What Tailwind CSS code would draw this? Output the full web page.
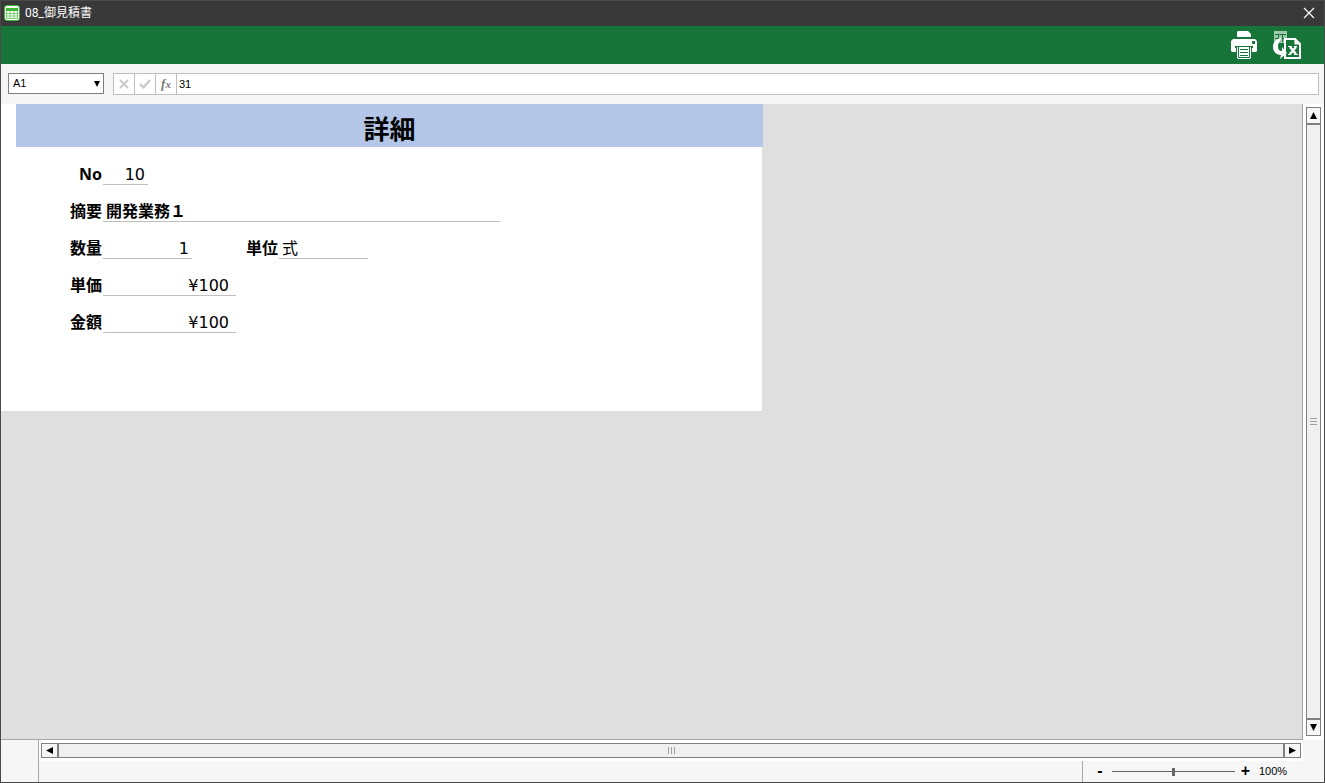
<!DOCTYPE html>
<html lang="ja">
<head>
    <meta charset="UTF-8">
    <meta name="viewport" content="width=device-width, initial-scale=1.0">
    <title>08_御見積書</title>
    <script src="https://cdn.jsdelivr.net/npm/@tailwindcss/browser@4"></script>
</head>
<body class="h-screen flex flex-col overflow-hidden border border-[#4a4a4a] bg-[#f6f6f6] text-black text-[11px] font-['Liberation_Sans','Noto_Sans_CJK_JP',sans-serif]">

    <!-- Title bar -->
    <header class="flex items-center justify-between h-[25px] shrink-0 bg-[#393939] text-white pl-[3px] pr-2 pb-px">
        <div class="flex items-center gap-[5px]">
            <svg class="size-4" viewBox="0 0 16 16">
                <rect x="0.5" y="0.5" width="15" height="15" rx="2.5" fill="#fff" stroke="#3db535"/>
                <path d="M2 3h12v3H2z" fill="#3db535"/>
                <path d="M2.500 6v7.500h11V6M2 8.500h12M2 11h12M6 6v7.500M10 6v7.500" fill="none" stroke="#7ccb74"/>
            </svg>
            <h1 class="text-[12px] leading-4 font-[Roboto,'Noto_Sans_CJK_JP',sans-serif]">08_御見積書</h1>
        </div>
        <button aria-label="閉じる" class="p-px">
            <svg class="size-3" viewBox="0 0 12 12" fill="none" stroke="#fff" stroke-width="1.200">
                <path d="M1 1l10 10M11 1L1 11"/>
            </svg>
        </button>
    </header>

    <!-- Toolbar -->
    <div class="flex items-center justify-end gap-[14px] h-[38px] shrink-0 bg-[#17753a] pr-[22px]">
        <button aria-label="印刷">
            <svg class="w-7 h-[30px]" viewBox="0 0 28 30">
                <path d="M8 1h10l3 3v3H7V2z" fill="#fff"/>
                <path d="M1 11l2-2h22l2 2v10l-1 1h-4v-5H6v5H2l-1-1z" fill="#fff"/>
                <path d="M22 11h3v3h-3z" fill="#17753a"/>
                <path d="M5 16h18v2H5z" fill="#17753a"/>
                <path d="M7 17h14v11l-1 1H8l-1-1z" fill="#fff"/>
                <path d="M8.500 17v10.500h11V17" fill="none" stroke="#17753a"/>
                <path d="M10 19.500h8M10 22.500h8M10 25.500h8" stroke="#17753a"/>
            </svg>
        </button>
        <button aria-label="Excel出力">
            <svg class="w-[30px] h-[30px]" viewBox="0 0 30 30">
                <path d="M2 1h13v12H2z" fill="#a0c8ae"/>
                <path d="M3 4.500h11M3 8.500h11M6.500 4v8M10.500 4v8" stroke="#17753a"/>
                <path d="M13 9h10l5 5v14H13z" fill="#17753a" stroke="#fff" stroke-width="2"/>
                <path d="M22.500 8v6.500H29z" fill="#fff"/>
                <path d="M8 8C3 10 1 13 1 17c0 5 4 8 8 8l-1 4 7-6-5-6v4c-3 0-4-2-4-5s2-6 4-8z" fill="#fff"/>
                <path d="M18 17l6 7M24 17l-6 7" stroke="#fff" stroke-width="2.400"/>
                <path d="M16 16.500h4M22 16.500h3M16 24.500h3M22 24.500h4" stroke="#fff"/>
            </svg>
        </button>
    </div>

    <!-- Name box and formula bar -->
    <div class="flex items-start gap-[9px] h-10 shrink-0 pt-[9px] pl-[7px] pr-[5px]">
        <div class="relative w-24 h-[21px]">
            <select aria-label="名前ボックス" class="appearance-none size-full border border-[#7f7f7f] bg-white pl-1">
                <option>A1</option>
            </select>
            <svg class="absolute right-1 top-2 w-[6px] h-[6px] pointer-events-none" viewBox="0 0 6 6"><path d="M0 0h6L3 6z"/></svg>
        </div>
        <div class="flex flex-1 h-[22px] border border-[#bfbfbf] bg-white">
            <button aria-label="キャンセル" class="flex items-center justify-center w-[21px] border-r border-[#bfbfbf]">
                <svg class="size-[10px]" viewBox="0 0 10 10" fill="none" stroke="#c8c8c8" stroke-width="1.800"><path d="M1 1l8 8M9 1L1 9"/></svg>
            </button>
            <button aria-label="入力" class="flex items-center justify-center w-[21px] border-r border-[#bfbfbf]">
                <svg class="w-3 h-[10px]" viewBox="0 0 12 10" fill="none" stroke="#c8c8c8" stroke-width="2.200"><path d="M1 5l3.500 3.500L11 1"/></svg>
            </button>
            <button aria-label="関数の挿入" class="w-[21px] border-r border-[#bfbfbf] text-[#777] font-bold italic text-[13px] leading-5 font-['Liberation_Serif',serif]">f<span class="text-[11px]">x</span></button>
            <input type="text" aria-label="数式バー" value="31" class="flex-1 min-w-0 pl-[2px] outline-none">
        </div>
    </div>

    <!-- Sheet area -->
    <div class="flex flex-1 min-h-0">
        <main class="flex-1 min-w-0 overflow-hidden bg-[#dfdfdf] border-r border-b border-[#a6a6a6]">
            <section class="w-[761px] h-[307px] bg-white pl-[15px] text-[16px] leading-[23px] font-['Noto_Sans','Noto_Sans_CJK_JP',sans-serif]">
                <h2 class="-mr-px h-[43px] pt-[7px] bg-[#b3c6e7] text-center text-[26px] leading-9 font-bold">詳細</h2>
                <dl class="pt-4 flex flex-col gap-[15px]">
                    <div class="flex h-[22px]">
                        <dt class="w-[87px] pr-px text-right font-bold">No</dt>
                        <dd class="w-[45px] pr-[3px] border-b border-[#bfbfbf] text-right font-['DejaVu_Sans',sans-serif]">10</dd>
                    </div>
                    <div class="flex h-[22px]">
                        <dt class="w-[87px] pr-px text-right font-bold">摘要</dt>
                        <dd class="w-[397px] pl-[3px] border-b border-[#bfbfbf] font-bold">開発業務１</dd>
                    </div>
                    <div class="flex h-[22px]">
                        <dt class="w-[87px] pr-px text-right font-bold">数量</dt>
                        <dd class="w-[89px] pr-[3px] border-b border-[#bfbfbf] text-right font-['DejaVu_Sans',sans-serif]">1</dd>
                        <dt class="w-[87px] pr-px text-right font-bold">単位</dt>
                        <dd class="w-[89px] pl-[3px] border-b border-[#bfbfbf]">式</dd>
                    </div>
                    <div class="flex h-[22px]">
                        <dt class="w-[87px] pr-px text-right font-bold">単価</dt>
                        <dd class="w-[133px] pr-[7px] border-b border-[#bfbfbf] text-right font-['DejaVu_Sans',sans-serif]">¥100</dd>
                    </div>
                    <div class="flex h-[22px]">
                        <dt class="w-[87px] pr-px text-right font-bold">金額</dt>
                        <dd class="w-[133px] pr-[7px] border-b border-[#bfbfbf] text-right font-['DejaVu_Sans',sans-serif]">¥100</dd>
                    </div>
                </dl>
            </section>
        </main>

        <!-- Vertical scroll bar -->
        <div class="flex flex-col w-[21px] bg-white px-[3px] pt-[3px] pb-1">
            <button aria-label="上へ" class="flex items-center justify-center h-[17px] border border-[#7f7f7f] bg-[#f6f6f6]">
                <svg class="size-[7px]" viewBox="0 0 7 7"><path d="M3.500 0L7 7H0z"/></svg>
            </button>
            <div class="flex flex-1 flex-col items-center justify-center gap-[2px] border border-[#7f7f7f] bg-[#f0f0f0]">
                <span class="w-[7px] h-px bg-[#a0a0a0]"></span>
                <span class="w-[7px] h-px bg-[#a0a0a0]"></span>
                <span class="w-[7px] h-px bg-[#a0a0a0]"></span>
            </div>
            <button aria-label="下へ" class="flex items-center justify-center h-[17px] border border-[#7f7f7f] bg-[#f6f6f6]">
                <svg class="size-[7px]" viewBox="0 0 7 7"><path d="M0 0h7L3.500 7z"/></svg>
            </button>
        </div>
    </div>

    <!-- Horizontal scroll bar and status bar -->
    <footer class="flex h-[42px] shrink-0">
        <div class="w-[38px] border-r border-[#a6a6a6]"></div>
        <div class="flex flex-col flex-1">
            <div class="flex h-[21px] mr-[21px] px-[2px] py-[3px] bg-white">
                <button aria-label="左へ" class="flex items-center justify-center w-[17px] border border-[#7f7f7f] bg-[#f6f6f6]">
                    <svg class="size-[7px]" viewBox="0 0 7 7"><path d="M7 0v7L0 3.500z"/></svg>
                </button>
                <div class="flex flex-1 items-center justify-center gap-[2px] border border-[#7f7f7f] bg-[#f0f0f0]">
                    <span class="w-px h-[7px] bg-[#a0a0a0]"></span>
                    <span class="w-px h-[7px] bg-[#a0a0a0]"></span>
                    <span class="w-px h-[7px] bg-[#a0a0a0]"></span>
                </div>
                <button aria-label="右へ" class="flex items-center justify-center w-[17px] border border-[#7f7f7f] bg-[#f6f6f6]">
                    <svg class="size-[7px]" viewBox="0 0 7 7"><path d="M0 0l7 3.500L0 7z"/></svg>
                </button>
            </div>
            <div class="flex flex-1 justify-end">
                <div class="flex items-center w-[242px] border-l border-[#a6a6a6] pl-3">
                    <button aria-label="縮小" class="w-[10px] pb-[2px] text-[16px] leading-4 font-bold">-</button>
                    <input type="range" min="0" max="200" value="100" aria-label="ズーム" class="appearance-none ml-[7px] w-[123px] h-2 bg-linear-to-b from-[#666] to-[#666] bg-[length:100%_1px] bg-center bg-no-repeat [&::-webkit-slider-thumb]:appearance-none [&::-webkit-slider-thumb]:w-[3px] [&::-webkit-slider-thumb]:h-2 [&::-webkit-slider-thumb]:bg-[#666]">
                    <button aria-label="拡大" class="ml-[5px] w-[11px] pb-[2px] text-[16px] leading-4 font-bold">+</button>
                    <span class="ml-2">100%</span>
                </div>
            </div>
        </div>
    </footer>

</body>
</html>
